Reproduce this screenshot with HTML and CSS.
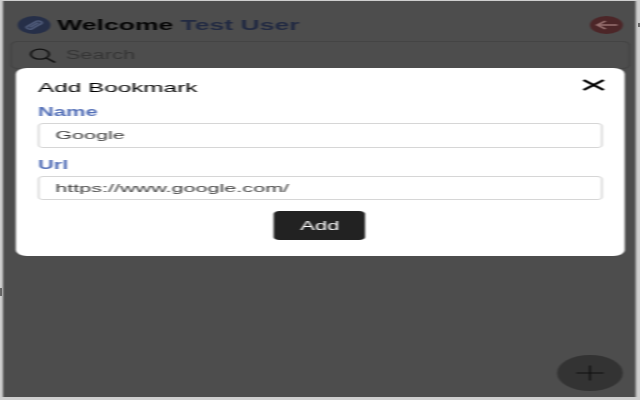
FILE: index.html
```html
<!DOCTYPE html>
<html lang="en">
<head>
    <meta charset="UTF-8">
    <title>Bookmarks</title>
    <link rel="stylesheet" href="styles.css">
</head>
<body>
    <div class="popup">
        <!-- Page behind the dialog, already dimmed -->
        <div class="header">
            <span class="logo">
                <svg viewBox="0 0 18 18" width="18" height="18">
                    <path d="M7 11 L11 7 M7.5 8 L5 10.5 a2 2 0 0 0 2.6 2.6 L10 10.5 M8 7.5 L10.5 5 a2 2 0 0 1 2.6 2.6 L10.5 10" fill="none" stroke="#515d7c" stroke-width="1.3" stroke-linecap="round"/>
                </svg>
            </span>
            <h1>Welcome <span class="user-name">Test User</span></h1>
            <button type="button" class="back-btn">
                <svg viewBox="0 0 18 18" width="18" height="18">
                    <path d="M15 9 H4 M8.5 5 L4 9 L8.5 13" fill="none" stroke="#96706f" stroke-width="1.5"/>
                </svg>
            </button>
        </div>
        <div class="search-box">
            <svg viewBox="0 0 15 15" width="15" height="15">
                <circle cx="6.2" cy="6.2" r="5" fill="none" stroke="#111" stroke-width="1.2"/>
                <path d="M9.8 10 L14.5 14.5" stroke="#111" stroke-width="1.3"/>
            </svg>
            <span class="search-text">Search</span>
        </div>
        <button type="button" class="add-fab">
            <svg viewBox="0 0 36 36" width="36" height="36">
                <path d="M18 10.5 V25.5 M10.5 18 H25.5" stroke="#111" stroke-width="1"/>
            </svg>
        </button>

        <!-- Add bookmark dialog -->
        <div class="overlay">
            <div class="modal">
                <div class="modal-header">
                    <h2>Add Bookmark</h2>
                    <svg class="close-icon" viewBox="0 0 12 12" width="12" height="12">
                        <path d="M0.5 1 L11.5 11 M11.5 1 L0.5 11" stroke="#000" stroke-width="1.8"/>
                    </svg>
                </div>
                <label for="name">Name</label>
                <input type="text" id="name" value="Google">
                <label for="url">Url</label>
                <input type="text" id="url" value="https://www.google.com/">
                <button type="button" class="submit-btn">Add</button>
            </div>
        </div>
    </div>
</body>
</html>
```

FILE: styles.css
```css
* {
    margin: 0;
    padding: 0;
    box-sizing: border-box;
    font-family: "Liberation Sans", Arial, sans-serif;
}

body {
    background-color: #cfcfcf;
    overflow: hidden;
    padding: 1px 0 0 3px;
}

/* Small marks that stick out past the popup edge */
body::before,
body::after {
    content: "";
    position: absolute;
    background-color: #666666;
}

body::before {
    left: 0;
    top: 288px;
    width: 2px;
    height: 8px;
}

body::after {
    right: 0;
    top: 23px;
    width: 2px;
    height: 4px;
}

/* The screenshot is a 346px popup stretched out to 633px */
.popup {
    position: relative;
    width: 346px;
    height: 396px;
    padding-top: 11.5px;
    background-color: #4d4d4d;
    transform: scaleX(1.8286);
    transform-origin: 0 0;
    filter: blur(0.45px);
}

.header {
    display: flex;
    align-items: center;
    height: 24px;
    padding: 0 7px 0 7.7px;
}

.logo {
    display: flex;
    width: 18px;
    height: 18px;
    border-radius: 50%;
    background-color: #262f48;
    margin-right: 4px;
}

.header h1 {
    flex: 1;
    font-size: 14.5px;
    color: #050505;
}

.user-name {
    color: #222a42;
}

.back-btn {
    display: flex;
    width: 18px;
    height: 18px;
    border: none;
    border-radius: 50%;
    background-color: #4c2628;
}

.search-box {
    display: flex;
    align-items: center;
    gap: 5px;
    height: 28px;
    margin: 4.5px 3px 0 3.8px;
    padding: 0 9.5px;
    border: 1px solid #444444;
    border-radius: 4px;
}

.search-text {
    font-size: 12px;
    color: #353535;
}

.add-fab {
    position: absolute;
    right: 7px;
    bottom: 6px;
    width: 36px;
    height: 36px;
    border: none;
    border-radius: 50%;
    background-color: #333333;
}

.overlay {
    position: absolute;
    top: 67px;
    left: 7.1px;
    right: 6.5px;
}

.modal {
    display: flex;
    flex-direction: column;
    height: 188px;
    padding: 9px 12px 0;
    background-color: #ffffff;
    border-radius: 6px;
}

.modal-header {
    display: flex;
    justify-content: space-between;
    align-items: center;
    height: 20px;
    margin-bottom: 8px;
}

.modal-header h2 {
    font-size: 13.3px;
    font-weight: normal;
    color: #000000;
}

.close-icon {
    margin: 0 -1px 4px 0;
}

.modal label {
    height: 14px;
    font-size: 12px;
    font-weight: bold;
    color: #5470b8;
    margin-bottom: 4px;
}

.modal input {
    height: 24.5px;
    padding: 0 8.5px;
    border: 1px solid #d6d6d6;
    border-radius: 3px;
    font-size: 11.8px;
    color: #3a3a3a;
    margin-bottom: 10px;
}

.submit-btn {
    align-self: center;
    width: 50px;
    height: 29px;
    margin-top: 1px;
    border: none;
    border-radius: 3px;
    background-color: #222222;
    color: #ffffff;
    font-size: 12px;
}
```
